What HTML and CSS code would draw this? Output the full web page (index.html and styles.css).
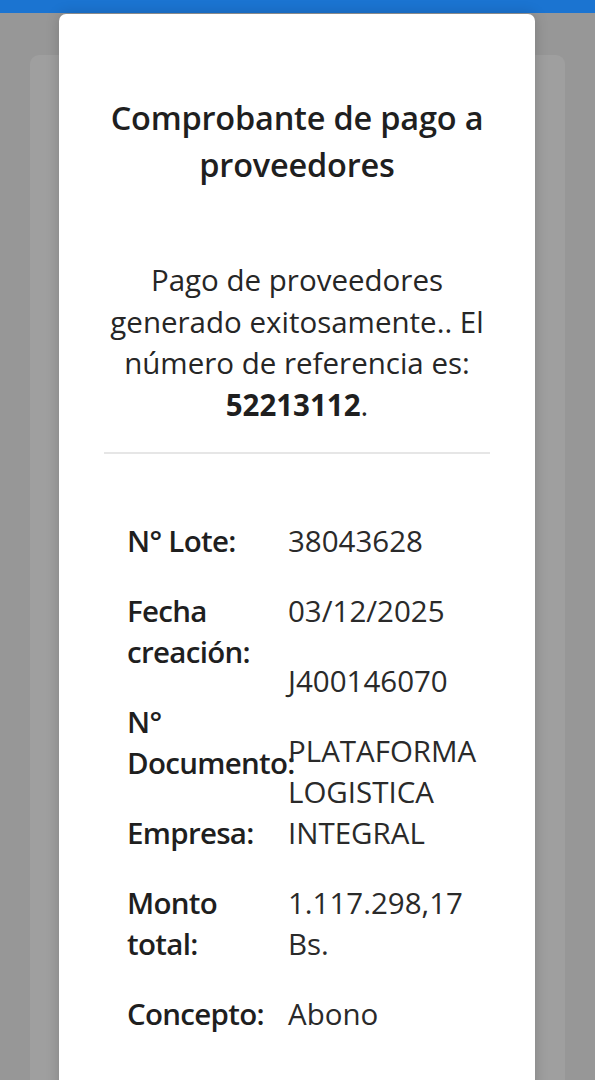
FILE: index.html
```html
<!DOCTYPE html>
<html lang="es">
<head>
<meta charset="utf-8">
<title>Comprobante de pago a proveedores</title>
<link rel="stylesheet" href="styles.css">
</head>
<body>
<div class="topbar"></div>
<main class="page">
  <div class="page-card"></div>
</main>
<section class="modal" role="dialog" aria-labelledby="modal-title">
  <h1 class="modal-title" id="modal-title">Comprobante de pago a proveedores</h1>
  <p class="modal-message">Pago de proveedores generado exitosamente.. El número de referencia es: <strong>52213112</strong>.</p>
  <hr class="divider">
  <div class="details">
    <div class="labels">
      <div class="label">N° Lote:</div>
      <div class="label">Fecha creación:</div>
      <div class="label">N° Documento:</div>
      <div class="label">Empresa:</div>
      <div class="label">Monto total:</div>
      <div class="label">Concepto:</div>
    </div>
    <div class="values">
      <div class="value">38043628</div>
      <div class="value">03/12/2025</div>
      <div class="value">J400146070</div>
      <div class="value">PLATAFORMA LOGISTICA INTEGRAL</div>
      <div class="value">1.117.298,17 Bs.</div>
      <div class="value">Abono</div>
    </div>
  </div>
</section>
</body>
</html>
```
FILE: styles.css
```css
* { box-sizing: border-box; }

html, body {
  margin: 0;
  padding: 0;
  height: 1080px;
  overflow: hidden;
}

body {
  background: #979797;
  font-family: "Open Sans", "Lato", sans-serif;
  color: #222222;
  position: relative;
}

.topbar {
  height: 13px;
  background: #1b74d1;
}

.page {
  padding: 42px 30px 0;
}

.page-card {
  height: 1200px;
  background: #9f9f9f;
  border-radius: 9px;
}

.modal {
  position: absolute;
  top: 14px;
  left: 59px;
  width: 476px;
  height: 1120px;
  background: #ffffff;
  border-radius: 7px 7px 0 0;
  padding: 80px 45px 0;
  box-shadow: 0 0 14px rgba(0, 0, 0, 0.18);
}

.modal-title {
  margin: 0;
  text-align: center;
  font-size: 32.5px;
  line-height: 47px;
  font-weight: 600;
  letter-spacing: -0.2px;
  color: #1f1f1f;
}

.modal-message {
  margin: 71px 0 0;
  text-align: center;
  font-size: 29.5px;
  line-height: 41.5px;
  font-weight: 400;
  color: #262626;
}

.modal-message strong {
  font-weight: 700;
  color: #1f1f1f;
}

.divider {
  margin: 27px 0 0;
  border: 0;
  border-top: 2px solid #e6e6e6;
}

.details {
  margin-top: 66px;
  padding-left: 23px;
  display: flex;
  font-size: 29.5px;
  line-height: 41px;
}

.labels,
.values {
  display: flex;
  flex-direction: column;
  gap: 29px;
}

.labels {
  width: 161px;
  flex: none;
}

.values {
  width: 200px;
}

.label {
  font-weight: 600;
  letter-spacing: -0.7px;
  color: #1f1f1f;
}

.value {
  font-weight: 400;
  color: #2a2a2a;
}
```
